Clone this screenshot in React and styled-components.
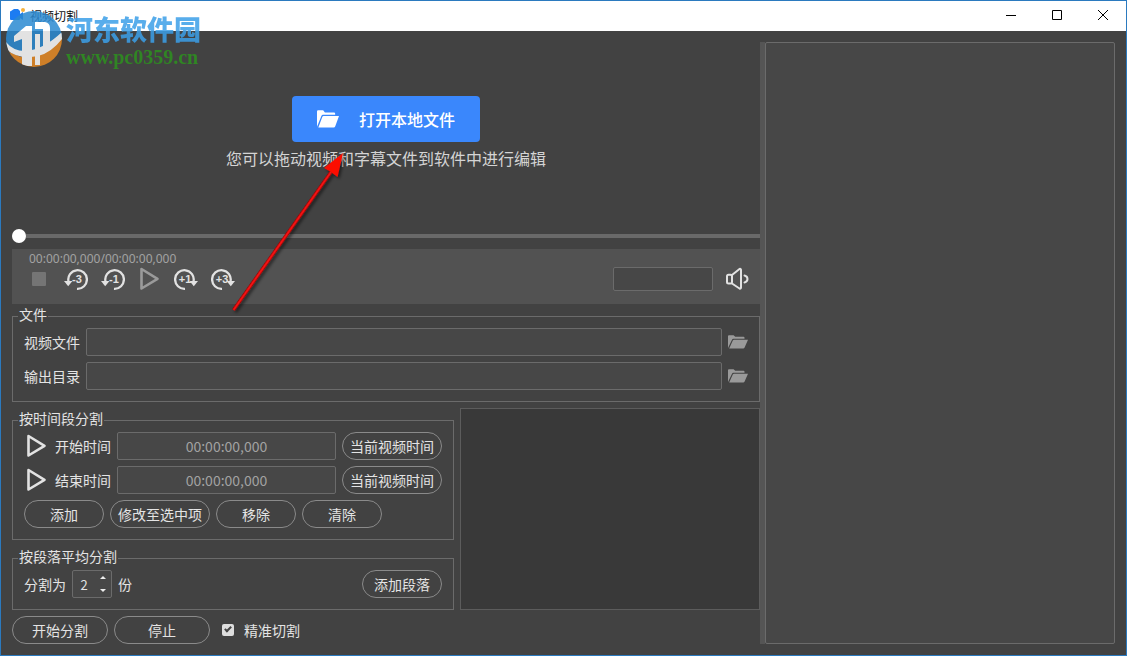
import React, { useState } from "react";
import styled, { createGlobalStyle } from "styled-components";

const color = {
  frame: "#2b7abf",
  body: "#424242",
  field: "#474747",
  line: "#6b6b6b",
  round: "#8a8a8a",
  text: "#e4e4e4",
  muted: "#a2a2a2",
};

const GlobalStyle = createGlobalStyle`
  *, *::before, *::after { box-sizing: border-box; }
  body { margin: 0; background: ${color.body}; }
  body, button, input {
    font-family: "Noto Sans CJK SC", "Noto Sans", sans-serif;
    font-size: 14px;
  }
  button { cursor: pointer; }
`;

const Window = styled.div`
  position: relative;
  display: flex;
  flex-direction: column;
  min-height: 100vh;
  border: 1px solid ${color.frame};
  background: ${color.body};
  color: ${color.text};
`;

const TitleBar = styled.header`
  display: flex;
  align-items: center;
  height: 30px;
  padding: 0 0 2px 8px;
  gap: 5px;
  background: #fff;
  color: #111;
`;

const Title = styled.h1`
  flex: 1;
  margin: 0;
  font-size: 12px;
  font-weight: 400;
`;

const WindowButtons = styled.div`
  display: flex;
`;

const WindowButton = styled.button`
  display: grid;
  place-items: center;
  width: 46px;
  height: 28px;
  padding: 0;
  border: 0;
  background: none;
`;

const Body = styled.main`
  flex: 1;
  display: grid;
  grid-template-columns: minmax(0, 1fr) 5px 350px;
  padding: 11px;
`;

const Editor = styled.div`
  display: flex;
  flex-direction: column;
`;

const Splitter = styled.div`
  background: #555;
`;

const Preview = styled.section`
  border: 1px solid ${color.line};
  border-radius: 2px;
  background: ${color.field};
`;

const DropZone = styled.section`
  flex: 1;
  display: flex;
  flex-direction: column;
  align-items: center;
  justify-content: center;
  gap: 4px;
  min-height: 120px;
`;

const OpenButton = styled.button`
  display: flex;
  align-items: center;
  justify-content: center;
  gap: 20px;
  width: 188px;
  height: 46px;
  padding: 0 0 1px;
  border: 0;
  border-radius: 4px;
  background: #3a87fc;
  color: #fff;
  font-size: 16px;
  font-weight: 500;
`;

const Hint = styled.p`
  margin: 0;
  padding-bottom: 2px;
  font-size: 16px;
  line-height: 24px;
  color: #d4d4d4;
`;

const SeekBar = styled.input`
  appearance: none;
  display: block;
  width: 100%;
  height: 14px;
  margin: 3px 0 6px;
  background: none;

  &::-webkit-slider-runnable-track {
    height: 4px;
    background: #696969;
  }
  &::-webkit-slider-thumb {
    appearance: none;
    width: 14px;
    height: 14px;
    margin-top: -5px;
    border-radius: 50%;
    background: #fff;
  }
`;

const Player = styled.section`
  padding: 1px 11px 13px 14px;
  background: #525252;
`;

const Clock = styled.div`
  padding-left: 3px;
  font-family: "Noto Sans", sans-serif;
  font-size: 12px;
  line-height: 17px;
  color: ${color.muted};
`;

const Controls = styled.div`
  display: flex;
  align-items: center;
  gap: 12px;
  height: 24px;
`;

const IconButton = styled.button`
  display: grid;
  place-items: center;
  flex: none;
  width: ${(p) => p.$width || 25}px;
  height: 24px;
  padding: 0;
  border: 0;
  background: none;
  color: ${(p) => (p.$dim ? "#9a9a9a" : "#e2e2e2")};
`;

const Level = styled.input`
  width: 100px;
  height: 24px;
  margin-left: auto;
  border: 1px solid ${color.line};
  border-radius: 2px;
  background: ${color.field};
  color: ${color.text};
`;

const Group = styled.fieldset`
  display: flex;
  flex-direction: column;
  gap: 6px;
  min-width: 0;
  margin: 0;
  padding: 0 11px 11px;
  border: 1px solid ${color.line};
`;

const Legend = styled.legend`
  margin-left: -6px;
  padding: 0 1px 4px;
  line-height: 20px;
`;

const Row = styled.div`
  display: flex;
  align-items: center;
  gap: 6px;
`;

const Field = styled.input`
  flex: 1;
  min-width: 0;
  height: 28px;
  padding: 0 6px;
  border: 1px solid ${color.line};
  border-radius: 2px;
  background: ${color.field};
  color: ${color.text};
  text-align: ${(p) => (p.$centered ? "center" : "left")};

  &::placeholder { color: ${color.muted}; opacity: 1; }
`;

const RoundButton = styled.button`
  width: ${(p) => p.$width || 80}px;
  height: 28px;
  padding: 0;
  border: 1px solid ${color.round};
  border-radius: 14px;
  background: none;
  color: ${color.text};
  margin-left: ${(p) => (p.$end ? "auto" : 0)};
`;

const SplitArea = styled.div`
  display: grid;
  grid-template-columns: minmax(0, 1fr) 300px;
  gap: 6px;
  margin: 6px 0;
`;

const Stack = styled.div`
  display: flex;
  flex-direction: column;
  gap: 6px;
  min-width: 0;
`;

const SegmentList = styled.div`
  border: 1px solid #5c5c5c;
  background: #393939;
`;

const Spin = styled.div`
  display: flex;
  width: 40px;
  height: 28px;
  border: 1px solid ${color.line};
  border-radius: 2px;
  background: ${color.field};
`;

const SpinInput = styled.input`
  appearance: textfield;
  width: 22px;
  padding: 0;
  border: 0;
  background: none;
  color: ${color.text};
  font-size: 13px;
  text-align: center;

  &::-webkit-inner-spin-button { display: none; }
`;

const SpinArrows = styled.div`
  flex: 1;
  display: flex;
  flex-direction: column;
`;

const SpinArrow = styled.button`
  flex: 1;
  display: grid;
  place-items: center;
  padding: 0;
  border: 0;
  background: none;
`;

const CheckLabel = styled.label`
  display: flex;
  align-items: center;
  gap: 10px;
  margin-left: 6px;
`;

const CheckBox = styled.input`
  appearance: none;
  display: grid;
  justify-content: center;
  width: 12px;
  height: 12px;
  margin: 0;
  border-radius: 2px;
  background: #dedede;

  &:checked::after {
    content: "";
    width: 4px;
    height: 7px;
    margin-top: 1px;
    border: solid #444;
    border-width: 0 2px 2px 0;
    transform: rotate(45deg);
  }
`;

const Watermark = styled.div`
  position: absolute;
  left: 4px;
  top: 9px;
  display: flex;
  gap: 3px;
  opacity: 0.85;
  pointer-events: none;
`;

const SiteName = styled.div`
  font-size: 27px;
  font-weight: 900;
  line-height: 37px;
  color: #3c9fe8;
`;

const SiteUrl = styled.div`
  font-family: "Liberation Serif", serif;
  font-size: 20px;
  font-weight: 700;
  line-height: 20px;
  color: #2d911f;
`;

const Pointer = styled.svg`
  position: absolute;
  left: 224px;
  top: 145px;
  pointer-events: none;
`;

const AppIcon = () => (
  <svg width="16" height="16" viewBox="0 0 16 16" aria-hidden="true">
    <path d="M1 5Q1 4 2 4L5 2H9L11 4V7L14 5V13L11 11V12Q11 13 10 13H2Q1 13 1 12Z" fill="#1c7cf2" />
    <circle cx="14" cy="3" r="2" fill="#f6b23c" />
  </svg>
);

const Folder = ({ width, height }) => (
  <svg width={width} height={height} viewBox="0 0 20 15" preserveAspectRatio="none" fill="currentColor" aria-hidden="true">
    <path d="M0 14V1.200Q0 .3 1 .3H5.600L7.200 2H15.500Q16.500 2 16.500 3V4H5.400Q4.400 4 4 5Z" />
    <path d="M6 5H20L16.600 13.500Q16.200 14.500 15.200 14.500H1.200L4.800 5.800Q5.200 5 6 5Z" />
  </svg>
);

const PlayIcon = () => (
  <svg width="24" height="24" viewBox="0 0 24 24" fill="none" stroke="currentColor" strokeWidth="2.600" strokeLinejoin="round" aria-hidden="true">
    <path d="M3.500 2L19.500 11.800L3.500 21.500Z" />
  </svg>
);

const SkipIcon = ({ label, forward }) => (
  <svg width="25" height="24" viewBox="0 0 25 24" aria-hidden="true">
    <g transform={forward ? "translate(25 0) scale(-1 1)" : undefined}>
      <path d="M5.500 14.500A9.300 9.300 0 1 1 14 21.800" fill="none" stroke="currentColor" strokeWidth="2.300" />
      <path d="M1 14H9.400L5.200 19.200Z" fill="currentColor" />
    </g>
    <text x={forward ? 11 : 14} y="16" textAnchor="middle" fontFamily="Liberation Sans, sans-serif" fontWeight="700" fontSize="11" fill="currentColor">
      {label}
    </text>
  </svg>
);

const SpeakerIcon = () => (
  <svg width="24" height="24" viewBox="0 0 24 24" fill="none" stroke="currentColor" strokeWidth="2" strokeLinejoin="round" strokeLinecap="round" aria-hidden="true">
    <rect x="2" y="7.800" width="5" height="8.800" rx="1.500" />
    <path d="M7 8L14.500 2Q16 1.500 16 3V20.500Q16 22 14.500 21.500L7 16.500" />
    <path d="M19.500 8.500Q22.500 9.300 22.500 12T19.500 15.500" />
  </svg>
);

const Emblem = () => (
  <svg width="58" height="58" viewBox="0 0 58 58" aria-hidden="true">
    <defs>
      <clipPath id="disc"><circle cx="29" cy="29" r="28" /></clipPath>
    </defs>
    <g clipPath="url(#disc)">
      <path d="M0 0H58V26L34 42L14 44L0 36Z" fill="#2b8ad2" />
      <path d="M0 40L16 47L36 44L58 26V58H0Z" fill="#e78a24" />
      <path d="M1 32Q8 41 20 41Q38 40 57 22V29Q46 43 33 46Q14 50 2 40Z" fill="#fff" />
      <path d="M9 26L21 16H27V56H17V29L9 32Z" fill="#fff" />
      <path d="M30 12H40Q45 13 45 18V35L38 39V19H30Z" fill="#fff" />
      <path d="M30 24H35V55H30Z" fill="#fff" />
    </g>
  </svg>
);

const TimeRow = ({ id, label }) => (
  <Row>
    <IconButton type="button" aria-label={`播放${label}`}><PlayIcon /></IconButton>
    <label htmlFor={id}>{label}</label>
    <Field id={id} $centered placeholder="00:00:00,000" />
    <RoundButton type="button" $width={100}>当前视频时间</RoundButton>
  </Row>
);

const FileRow = ({ id, label }) => (
  <Row>
    <label htmlFor={id}>{label}</label>
    <Field id={id} />
    <IconButton type="button" $width={20} $dim aria-label={`浏览${label}`}>
      <Folder width={20} height={14} />
    </IconButton>
  </Row>
);

export default function App() {
  const [parts, setParts] = useState(2);
  const [precise, setPrecise] = useState(true);

  return (
    <>
      <GlobalStyle />
      <Window>
        <TitleBar>
          <AppIcon />
          <Title>视频切割</Title>
          <WindowButtons>
            <WindowButton type="button" aria-label="最小化">
              <svg width="10" height="10" stroke="#000"><path d="M0 5.500H10" /></svg>
            </WindowButton>
            <WindowButton type="button" aria-label="最大化">
              <svg width="10" height="10" stroke="#000" fill="none"><path d="M.5 .5H9.500V9.500H.5Z" /></svg>
            </WindowButton>
            <WindowButton type="button" aria-label="关闭">
              <svg width="10" height="10" stroke="#000"><path d="M0 0L10 10M10 0L0 10" /></svg>
            </WindowButton>
          </WindowButtons>
        </TitleBar>

        <Body>
          <Editor>
            <DropZone>
              <OpenButton type="button">
                <Folder width={22} height={18} />
                打开本地文件
              </OpenButton>
              <Hint>您可以拖动视频和字幕文件到软件中进行编辑</Hint>
            </DropZone>

            <SeekBar type="range" min="0" max="100" defaultValue="0" aria-label="播放进度" />

            <Player>
              <Clock>00:00:00,000/00:00:00,000</Clock>
              <Controls>
                <IconButton type="button" aria-label="停止播放">
                  <svg width="14" height="14"><rect width="14" height="14" rx="1" fill="#757575" /></svg>
                </IconButton>
                <IconButton type="button" aria-label="后退3秒"><SkipIcon label="-3" /></IconButton>
                <IconButton type="button" aria-label="后退1秒"><SkipIcon label="-1" /></IconButton>
                <IconButton type="button" $dim aria-label="播放"><PlayIcon /></IconButton>
                <IconButton type="button" aria-label="前进1秒"><SkipIcon label="+1" forward /></IconButton>
                <IconButton type="button" aria-label="前进3秒"><SkipIcon label="+3" forward /></IconButton>
                <Level aria-label="音量" />
                <IconButton type="button" $width={24} aria-label="静音"><SpeakerIcon /></IconButton>
              </Controls>
            </Player>

            <Group>
              <Legend>文件</Legend>
              <FileRow id="video" label="视频文件" />
              <FileRow id="output" label="输出目录" />
            </Group>

            <SplitArea>
              <Stack>
                <Group>
                  <Legend>按时间段分割</Legend>
                  <TimeRow id="start" label="开始时间" />
                  <TimeRow id="end" label="结束时间" />
                  <Row>
                    <RoundButton type="button">添加</RoundButton>
                    <RoundButton type="button" $width={100}>修改至选中项</RoundButton>
                    <RoundButton type="button">移除</RoundButton>
                    <RoundButton type="button">清除</RoundButton>
                  </Row>
                </Group>
                <Group>
                  <Legend>按段落平均分割</Legend>
                  <Row>
                    <label htmlFor="parts">分割为</label>
                    <Spin>
                      <SpinInput id="parts" type="number" min="1" value={parts} onChange={(e) => setParts(Number(e.target.value))} />
                      <SpinArrows>
                        <SpinArrow type="button" aria-label="增加" onClick={() => setParts(parts + 1)}>
                          <svg width="6" height="3"><path d="M0 3L3 0L6 3Z" fill="#eee" /></svg>
                        </SpinArrow>
                        <SpinArrow type="button" aria-label="减少" onClick={() => setParts(Math.max(1, parts - 1))}>
                          <svg width="6" height="3"><path d="M0 0L3 3L6 0Z" fill="#eee" /></svg>
                        </SpinArrow>
                      </SpinArrows>
                    </Spin>
                    <span>份</span>
                    <RoundButton type="button" $end>添加段落</RoundButton>
                  </Row>
                </Group>
              </Stack>
              <SegmentList />
            </SplitArea>

            <Row>
              <RoundButton type="button" $width={96}>开始分割</RoundButton>
              <RoundButton type="button" $width={96}>停止</RoundButton>
              <CheckLabel>
                <CheckBox type="checkbox" checked={precise} onChange={(e) => setPrecise(e.target.checked)} />
                精准切割
              </CheckLabel>
            </Row>
          </Editor>
          <Splitter />
          <Preview />
        </Body>

        <Watermark>
          <Emblem />
          <div>
            <SiteName>河东软件园</SiteName>
            <SiteUrl>www.pc0359.cn</SiteUrl>
          </div>
        </Watermark>

        <Pointer width="130" height="175" viewBox="0 0 130 175" aria-hidden="true">
          <defs>
            <filter id="shade" x="-20%" y="-20%" width="150%" height="150%">
              <feDropShadow dx="2" dy="2" stdDeviation="1.500" floodColor="#000" floodOpacity="0.500" />
            </filter>
          </defs>
          <g filter="url(#shade)">
            <path d="M8.500 164L106 26" stroke="#a00808" strokeWidth="3.400" />
            <path d="M8.500 164L106 26" stroke="#f01212" strokeWidth="2" />
            <path d="M118 7L112.500 31L106 26L99 22Z" fill="#fb0b06" />
          </g>
        </Pointer>
      </Window>
    </>
  );
}
